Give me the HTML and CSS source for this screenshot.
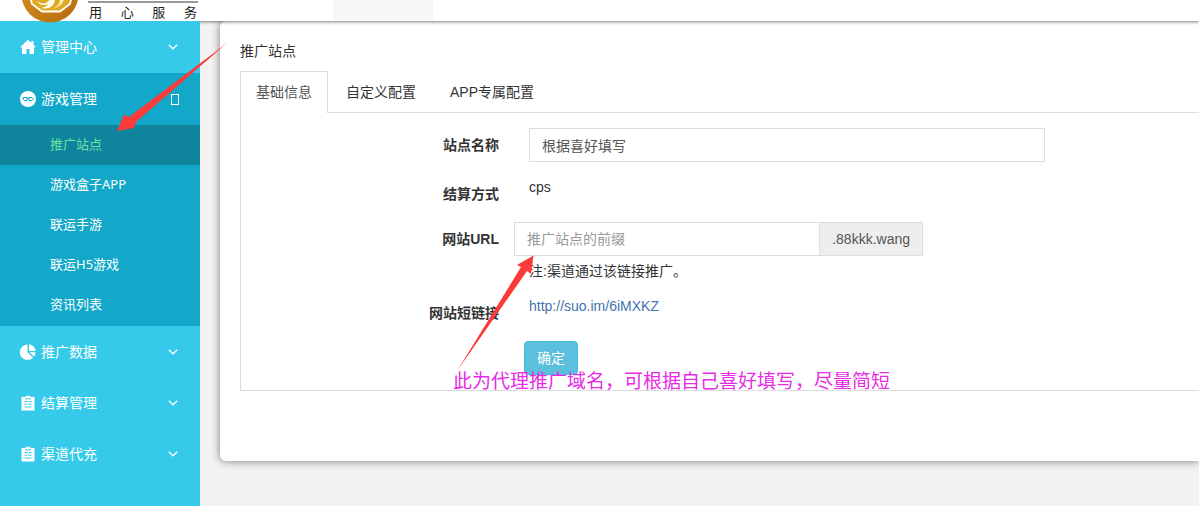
FILE: index.html
```html
<!DOCTYPE html>
<html lang="zh-CN">
<head>
<meta charset="utf-8">
<title>推广站点</title>
<link rel="stylesheet" href="styles.css">
</head>
<body>
<header class="topbar">
  <div class="brand">
    <svg class="brand-logo" width="56" height="23" viewBox="0 0 56 23" aria-hidden="true">
      <defs>
        <linearGradient id="gold" x1="0" y1="0" x2="1" y2="1">
          <stop offset="0" stop-color="#d9981c"/>
          <stop offset="1" stop-color="#b5690f"/>
        </linearGradient>
      </defs>
      <circle cx="28" cy="-6" r="28.500" fill="url(#gold)"/>
      <path d="M8 -4L10 4L20 11.500H38L48 4L50 -4" fill="#e0a822" stroke="#fff" stroke-width="1.800"/>
      <path d="M15 1C20 5 25 4 28 -1H33C33 6 27 10 19 8C23 7 25 6 26 4C22 6 17 5 15 1Z" fill="#fffbe6"/>
      <path d="M38 -1C38 4 35 7 30 9C36 8 41 4 42 -1Z" fill="#fff0b8"/>
    </svg>
    <div class="brand-slogan"><span>用</span><span>心</span><span>服</span><span>务</span></div>
  </div>
  <div class="topbar-slot"></div>
</header>

<div class="layout">
  <nav class="sidebar">
    <a class="menu-item" href="#">
      <svg class="menu-icon" viewBox="0 0 16 16"><path d="M8 .8L0 8.200H2V15H6.400V10H9.600V15H14V8.200H16L13.500 5.900V2H11.400V4Z"/></svg>
      <span class="menu-text">管理中心</span>
      <svg class="chevron" viewBox="0 0 10 6"><path d="M.8 .8L5 4.800L9.200 .8"/></svg>
    </a>
    <div class="menu-group">
      <a class="menu-item" href="#">
        <svg class="menu-icon" viewBox="0 0 16 16"><circle cx="8" cy="8" r="8"/><path class="icon-cut" d="M3 6.500H7V9.500H4.500L3 8ZM9 6.500H12L13.500 8L12 9.500H9ZM7 7H9"/></svg>
        <span class="menu-text">游戏管理</span>
        <span class="open-mark"></span>
      </a>
      <a class="sub-item active" href="#">推广站点</a>
      <a class="sub-item" href="#">游戏盒子APP</a>
      <a class="sub-item" href="#">联运手游</a>
      <a class="sub-item" href="#">联运H5游戏</a>
      <a class="sub-item" href="#">资讯列表</a>
    </div>
    <a class="menu-item" href="#">
      <svg class="menu-icon" viewBox="0 0 16 16"><path d="M7.500 .5A7.700 7.700 0 1 0 13 13.700L7.500 8.300Z"/><path d="M9 .2A7.300 7.300 0 0 1 15.600 7H9Z"/><path d="M9.300 8.200H15.600A7 7 0 0 1 13.900 12.600Z"/></svg>
      <span class="menu-text">推广数据</span>
      <svg class="chevron" viewBox="0 0 10 6"><path d="M.8 .8L5 4.800L9.200 .8"/></svg>
    </a>
    <a class="menu-item" href="#">
      <svg class="menu-icon" viewBox="0 0 16 16"><path d="M1.500 2H5Q5.500 .5 8 .5Q10.500 .5 11 2H14.500V15.500H1.500Z"/><path class="icon-cut bright" d="M5 3.800H11M4.500 6.500H8M9 6.500H11.500M4.500 9.200H7M8 9.200H11.500M4.500 12H11.500"/></svg>
      <span class="menu-text">结算管理</span>
      <svg class="chevron" viewBox="0 0 10 6"><path d="M.8 .8L5 4.800L9.200 .8"/></svg>
    </a>
    <a class="menu-item" href="#">
      <svg class="menu-icon" viewBox="0 0 16 16"><path d="M1.500 2H5Q5.500 .5 8 .5Q10.500 .5 11 2H14.500V15.500H1.500Z"/><path class="icon-cut bright" d="M5 3.800H11M4.500 6.500H8M9 6.500H11.500M4.500 9.200H7M8 9.200H11.500M4.500 12H11.500"/></svg>
      <span class="menu-text">渠道代充</span>
      <svg class="chevron" viewBox="0 0 10 6"><path d="M.8 .8L5 4.800L9.200 .8"/></svg>
    </a>
  </nav>

  <main class="content">
    <section class="card">
      <h1 class="card-title">推广站点</h1>
      <div class="tabs">
        <a class="tab current" href="#">基础信息</a>
        <a class="tab" href="#">自定义配置</a>
        <a class="tab" href="#">APP专属配置</a>
      </div>
      <form class="panel">
        <div class="row">
          <label class="label" for="site-name">站点名称</label>
          <input class="input" id="site-name" type="text" value="根据喜好填写">
        </div>
        <div class="row">
          <span class="label">结算方式</span>
          <span>cps</span>
        </div>
        <div class="row">
          <label class="label" for="site-url">网站URL</label>
          <div>
            <div class="input-group">
              <input class="input" id="site-url" type="text" placeholder="推广站点的前缀">
              <span class="addon">.88kkk.wang</span>
            </div>
            <p class="note">注:渠道通过该链接推广。</p>
          </div>
        </div>
        <div class="row">
          <span class="label">网站短链接</span>
          <span><a class="link" href="#">http://suo.im/6iMXKZ</a></span>
        </div>
        <div class="row submit-row">
          <button class="submit" type="button">确定</button>
        </div>
      </form>
    </section>
  </main>
</div>

<svg class="arrows" width="600" height="400" viewBox="0 0 600 400" aria-hidden="true">
  <path d="M227 43L129 117L124 114.500L117 131L134 128L136 122Z"/>
  <path d="M457 371L521 267L517 265L533.500 255.500L531 274L527 271Z"/>
</svg>
<p class="remark">此为代理推广域名，可根据自己喜好填写，尽量简短</p>
</body>
</html>
```
FILE: styles.css
```css
* {
  box-sizing: border-box;
}

body {
  margin: 0;
  min-height: 100vh;
  display: flex;
  flex-direction: column;
  position: relative;
  overflow-x: hidden;
  background: #f2f2f2;
  color: #333;
  font: 14px/20px "Liberation Sans", "Noto Sans CJK SC", sans-serif;
}

a {
  color: inherit;
  text-decoration: none;
}

/* top bar */
.topbar {
  position: relative;
  height: 21px;
  display: flex;
  background: #fff;
  box-shadow: 0 1px 3px rgba(0, 0, 0, .5);
}

.brand {
  position: relative;
  z-index: 2;
  width: 200px;
  margin-right: 133px;
  padding-left: 22px;
  display: flex;
  align-items: flex-start;
  gap: 10px;
}

.brand-logo {
  flex: none;
}

.brand-slogan {
  width: 110px;
  margin-top: 1px;
  padding: 0 1px;
  border-top: 2px solid #999;
  display: flex;
  justify-content: space-between;
  color: #222;
  font-size: 13px;
  line-height: 20px;
}

.topbar-slot {
  width: 100px;
  background: #f7f7f7;
}

/* page columns */
.layout {
  flex: 1;
  display: flex;
}

.sidebar {
  position: relative;
  z-index: 1;
  flex: none;
  width: 200px;
  background: #36caea;
  color: #fff;
  font-family: "Noto Sans", "Noto Sans CJK SC", sans-serif;
}

.menu-item {
  height: 52px;
  padding: 0 21px 0 20px;
  display: flex;
  align-items: center;
}

.menu-group {
  padding-bottom: 1px;
  background: #13a8ca;
}

.menu-group ~ .menu-item {
  height: 51px;
}

.menu-icon {
  width: 16px;
  height: 16px;
  margin-right: 5px;
  fill: #fff;
}

.icon-cut {
  fill: none;
  stroke: #13a8ca;
}

.icon-cut.bright {
  stroke: #36caea;
}

.menu-text {
  flex: 1;
}

.chevron {
  width: 10px;
  height: 6px;
  margin-right: 1px;
  fill: none;
  stroke: #fff;
  stroke-width: 1.3;
}

.open-mark {
  width: 8px;
  height: 11px;
  border: 1px solid #fff;
}

.sub-item {
  display: block;
  padding: 0 0 2px 50px;
  font-size: 13px;
  line-height: 38px;
}

.sub-item.active {
  background: #0f849d;
  color: #6fe0a4;
}

/* content card */
.content {
  flex: 1;
  padding-left: 20px;
}

.card {
  padding: 20px 0 70px 20px;
  border-radius: 6px 0 0 6px;
  background: #fff;
  box-shadow: 0 0 8px rgba(0, 0, 0, .5);
}

.card-title {
  margin: 0 0 10px;
  font-size: 14px;
  font-weight: normal;
  line-height: 20px;
}

.tabs {
  display: flex;
  gap: 2px;
  border-bottom: 1px solid #ddd;
}

.tab {
  padding: 10px 15px;
  border: 1px solid transparent;
  border-bottom: 0;
}

.tab.current {
  margin-bottom: -1px;
  padding-bottom: 11px;
  border-color: #ddd;
  background: #fff;
  color: #555;
}

.panel {
  padding: 15px 0;
  border-left: 1px solid #ddd;
  border-bottom: 1px solid #ddd;
}

.row {
  display: grid;
  grid-template-columns: 258fr 516fr 124fr;
  column-gap: 30px;
  margin-bottom: 15px;
}

.label {
  padding-top: 7px;
  font-weight: bold;
  text-align: right;
}

.input {
  width: 100%;
  height: 34px;
  padding: 6px 12px;
  border: 1px solid #ddd;
  border-radius: 0;
  background: #fff;
  color: #555;
  font: inherit;
}

.input::placeholder {
  color: #999;
}

.row:nth-child(2) {
  margin-bottom: 18px;
}

.input-group {
  margin-left: -15px;
  margin-right: 122px;
  display: flex;
}

.addon {
  padding: 6px 12px;
  border: 1px solid #ddd;
  border-left: 0;
  background: #eee;
  color: #555;
}

.note {
  margin: 5px 0 0;
}

.link {
  color: #4373b0;
}

.submit-row {
  margin: 18px 0 0;
}

.submit {
  grid-column: 2;
  justify-self: start;
  margin-left: -5px;
  padding: 6px 12px;
  border: 1px solid #46b8da;
  border-radius: 4px;
  background: #5bc0de;
  color: #fff;
  font: inherit;
}

/* hand-drawn notes over the page */
.arrows {
  position: absolute;
  z-index: 3;
  left: 0;
  top: 0;
  fill: #fb3a3a;
  pointer-events: none;
}

.remark {
  position: absolute;
  z-index: 3;
  left: 453px;
  top: 368px;
  margin: 0;
  color: #e62be6;
  font-size: 19px;
  line-height: 28px;
}
```
